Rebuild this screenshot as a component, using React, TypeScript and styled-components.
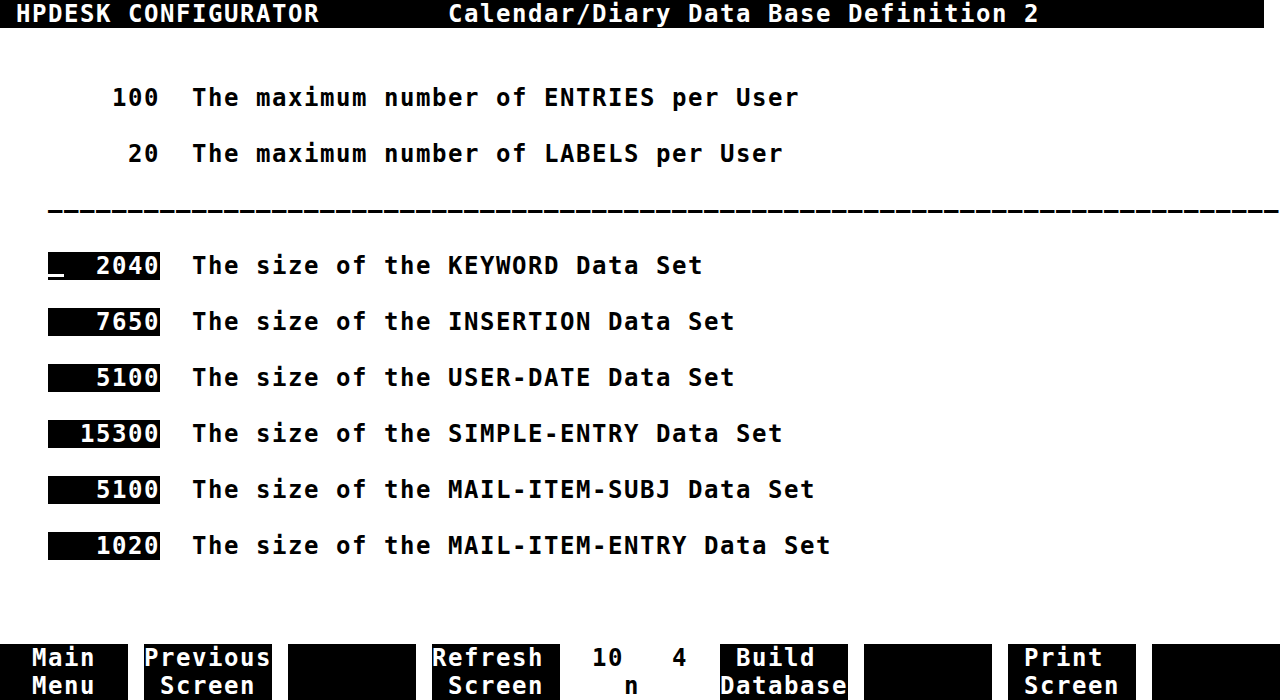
import React from 'react';
import styled, { createGlobalStyle } from 'styled-components';

const GlobalStyle = createGlobalStyle`
  html, body {
    margin: 0;
    padding: 0;
    background: #ffffff;
  }
`;

// every character cell of the terminal is 16 x 28
const Screen = styled.div`
  display: flex;
  flex-direction: column;
  width: 1280px;
  height: 700px;
  overflow: hidden;
  background: #ffffff;
  color: #000000;
  font-family: 'DejaVu Sans Mono', 'Liberation Mono', monospace;
  font-weight: 700;
  font-size: 24px;
  letter-spacing: calc(16px - 1ch);
`;

const Line = styled.div`
  height: 28px;
  line-height: 28px;
  white-space: pre;
`;

const TitleBar = styled(Line)`
  width: 1264px;
  background: #000000;
  color: #ffffff;
`;

const Field = styled.span`
  position: relative;
  display: inline-block;
  height: 28px;
  background: #000000;
  color: #ffffff;
  vertical-align: top;
`;

const Cursor = styled.span`
  position: absolute;
  left: 0;
  top: 22px;
  width: 16px;
  height: 3px;
  background: #ffffff;
`;

const KeyBar = styled.div`
  display: flex;
  gap: 16px;
  margin-top: auto;
  height: 56px;
`;

const Key = styled.div`
  width: 128px;
  background: #000000;
  color: #ffffff;
`;

const Status = styled.div`
  width: 128px;
`;

const fields = [
  { value: '2040', name: 'KEYWORD' },
  { value: '7650', name: 'INSERTION' },
  { value: '5100', name: 'USER-DATE' },
  { value: '15300', name: 'SIMPLE-ENTRY' },
  { value: '5100', name: 'MAIL-ITEM-SUBJ' },
  { value: '1020', name: 'MAIL-ITEM-ENTRY' },
];

const leftKeys = [
  ['Main', 'Menu'],
  ['Previous', 'Screen'],
  ['', ''],
  ['Refresh', 'Screen'],
];

const rightKeys = [
  ['Build', 'Database'],
  ['', ''],
  ['Print', 'Screen'],
  ['', ''],
];

const centre = (s: string) => ' '.repeat(Math.floor((8 - s.length) / 2)) + s;

const FunctionKey: React.FC<{ label: string[] }> = ({ label }) => (
  <Key>
    <Line>{centre(label[0])}</Line>
    <Line>{centre(label[1])}</Line>
  </Key>
);

const App: React.FC = () => {
  return (
    <>
      <GlobalStyle />
      <Screen>
        <TitleBar>{' HPDESK CONFIGURATOR        Calendar/Diary Data Base Definition 2'}</TitleBar>
        <Line />
        <Line />
        <Line>{'       100  The maximum number of ENTRIES per User'}</Line>
        <Line />
        <Line>{'        20  The maximum number of LABELS per User'}</Line>
        <Line />
        <Line>{'   ' + '–'.repeat(77)}</Line>
        <Line />
        {fields.map((f, i) => (
          <React.Fragment key={f.name}>
            {i > 0 && <Line />}
            <Line>
              {'   '}
              <Field>
                {f.value.padStart(7)}
                {i === 0 && <Cursor />}
              </Field>
              {`  The size of the ${f.name} Data Set`}
            </Line>
          </React.Fragment>
        ))}
        <KeyBar>
          {leftKeys.map((k, i) => (
            <FunctionKey key={'l' + i} label={k} />
          ))}
          <Status>
            <Line>{' 10   4'}</Line>
            <Line>{'   n'}</Line>
          </Status>
          {rightKeys.map((k, i) => (
            <FunctionKey key={'r' + i} label={k} />
          ))}
        </KeyBar>
      </Screen>
    </>
  );
};

export default App;
